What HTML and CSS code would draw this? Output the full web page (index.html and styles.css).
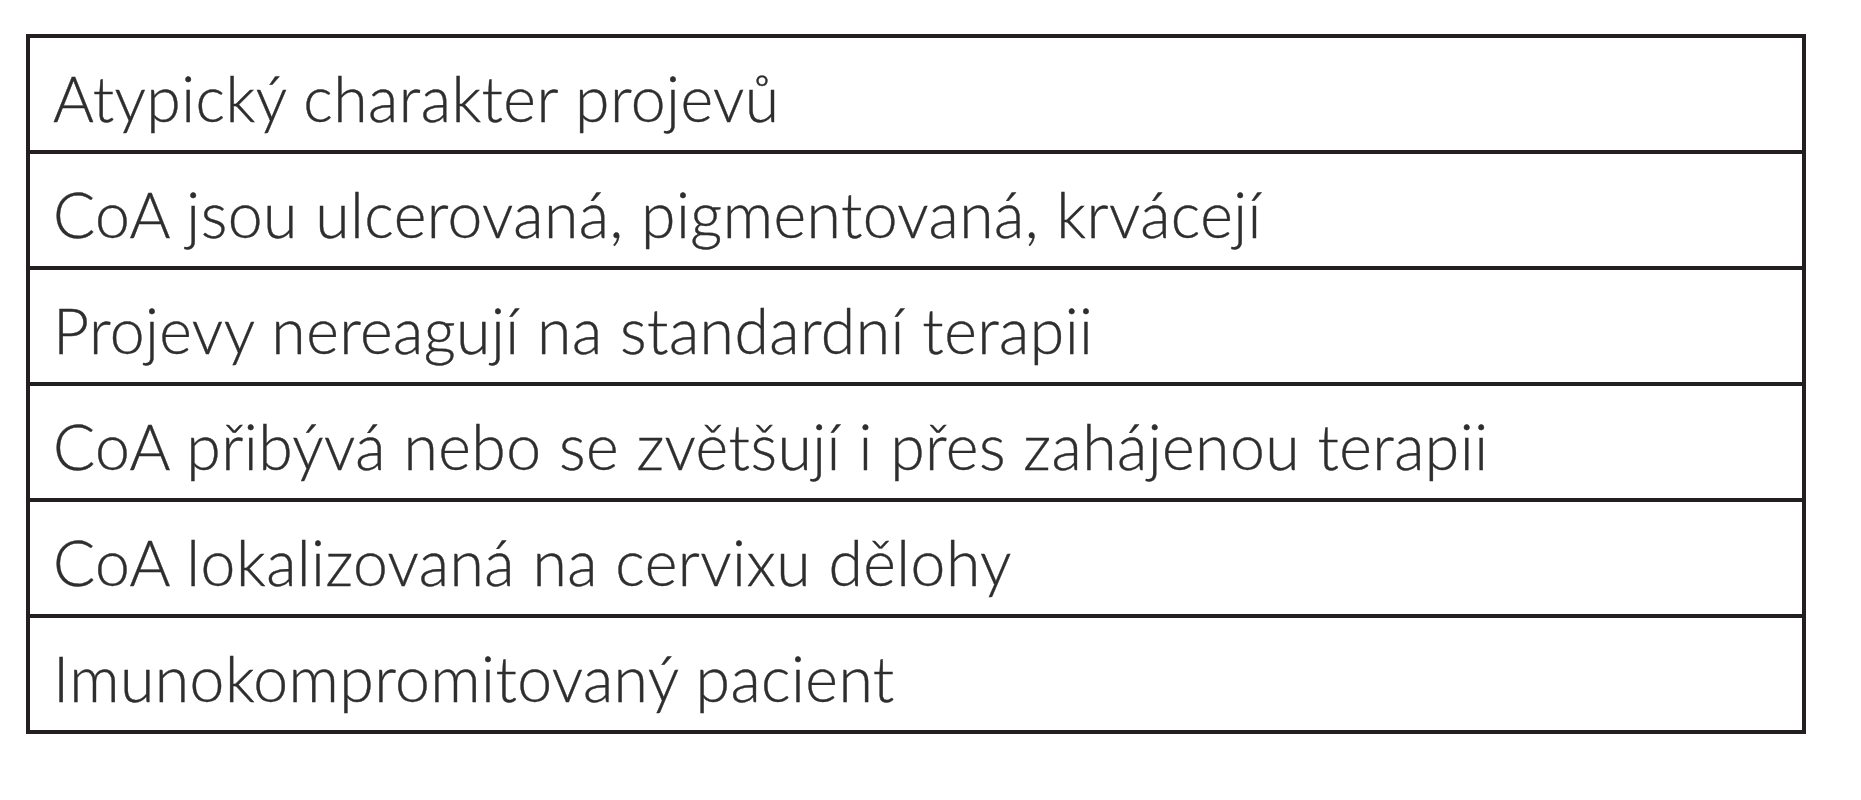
FILE: index.html
```html
<!DOCTYPE html>
<html lang="cs">
<head>
<meta charset="utf-8">
<title>Tabulka</title>
<link rel="stylesheet" href="styles.css">
</head>
<body>
<div class="table">
  <div class="row">Atypický charakter projevů</div>
  <div class="row">CoA jsou ulcerovaná, pigmentovaná, krvácejí</div>
  <div class="row">Projevy nereagují na standardní terapii</div>
  <div class="row">CoA přibývá nebo se zvětšují i přes zahájenou terapii</div>
  <div class="row">CoA lokalizovaná na cervixu dělohy</div>
  <div class="row">Imunokompromitovaný pacient</div>
</div>
</body>
</html>
```

FILE: styles.css
```css
html, body {
  margin: 0;
  padding: 0;
  background: #ffffff;
}

body {
  padding: 34px 0 0 26px;
}

.table {
  width: 1780px;
  box-sizing: border-box;
  border: 4px solid #231f20;
  display: flex;
  flex-direction: column;
}

.row {
  height: 112px;
  box-sizing: border-box;
  display: flex;
  align-items: center;
  padding: 6px 0 0 23px;
  font-family: Lato, "Liberation Sans", sans-serif;
  font-size: 62.5px;
  font-weight: 300;
  letter-spacing: 0.45px;
  color: #2e2e2e;
  -webkit-text-stroke: 0.4px #2e2e2e;
  white-space: nowrap;
}

.row + .row {
  height: 116px;
  border-top: 4px solid #231f20;
}
```
